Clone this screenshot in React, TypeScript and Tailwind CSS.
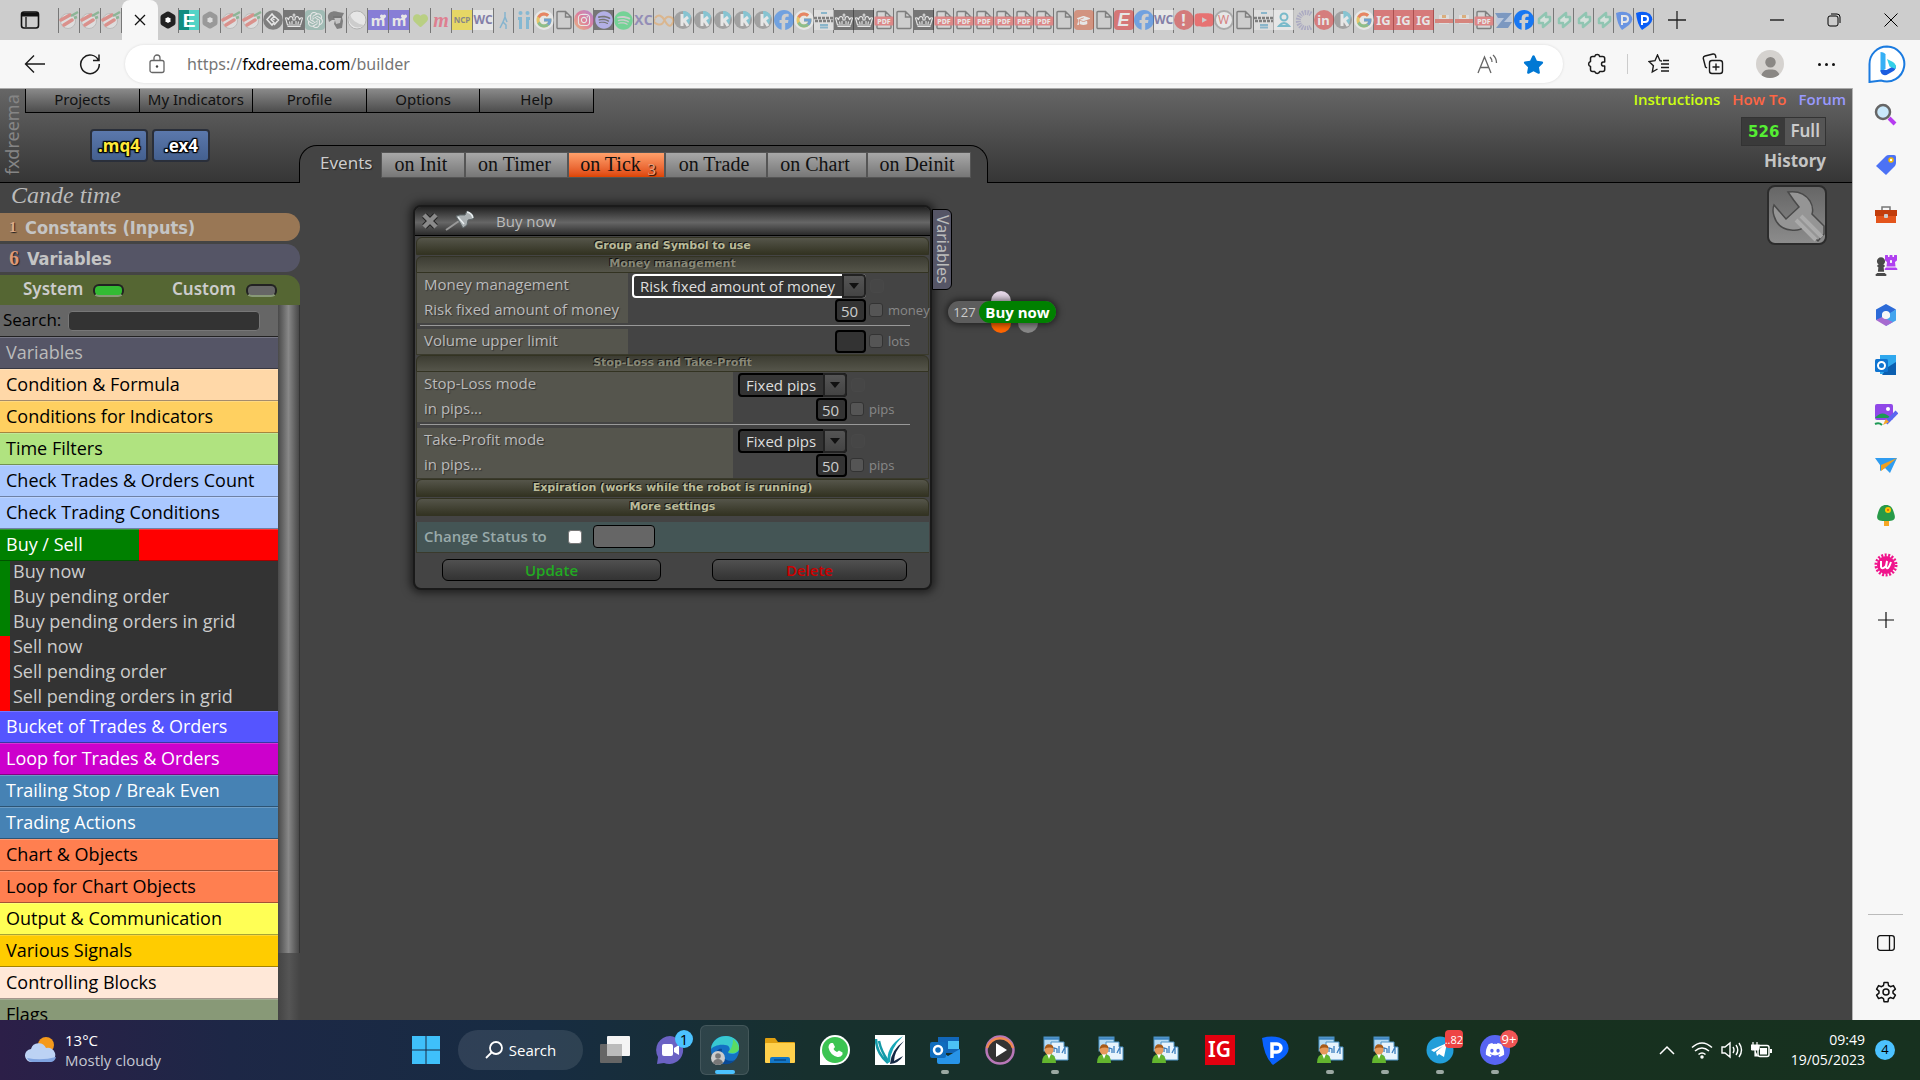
import React from "react";
import { FaFacebook, FaChessPawn, FaChessRook, FaDiscord, FaInstagram, FaSpotify, FaYoutube, FaUser, FaHeart, FaGraduationCap, FaStar } from "react-icons/fa6";
import { FcGoogle } from "react-icons/fc";
import { SiOpenai } from "react-icons/si";

/* ---------- browser tabs ---------- */

function Sq({ c, children }: { c: string; children?: React.ReactNode }) {
  return <span className={`flex size-5 items-center justify-center overflow-hidden leading-none ${c}`}>{children}</span>;
}

function Crown() {
  return (
    <svg viewBox="0 0 20 20" className="size-5">
      <path d="M3.500 15L1.500 8q2-1 3 2Q5 6.500 7 6.500T9 10h2q0-3.500 2-3.500T15.500 10q1-3 3-2l-2 7z" fill="none" stroke="#fff" strokeWidth="1.100" />
      <path d="M3.500 16.500h13M10 3.500v4M8.500 5h3M8 11v3M12 11v3M5.500 11.500l.5 2.500M14.500 11.500L14 14" stroke="#fff" strokeWidth="1.100" />
    </svg>
  );
}

function Doc({ pdf }: { pdf?: boolean }) {
  return (
    <svg viewBox="0 0 20 20" className="size-5">
      <path d="M4 1.500h7.500L17 7v10.500a1 1 0 0 1-1 1H4a1 1 0 0 1-1-1v-15a1 1 0 0 1 1-1zM11.500 1.500V7H17" fill={pdf ? "#ddd" : "none"} stroke="#333" strokeWidth="1.400" />
      {pdf && <rect x="0.500" y="6.500" width="19" height="9" rx="1" fill="#ee4444" />}
      {pdf && <text x="10" y="13.600" textAnchor="middle" fontFamily="Noto Sans" fontWeight="800" fontSize="7" fill="#fff">PDF</text>}
    </svg>
  );
}

function Hex({ light }: { light?: boolean }) {
  return (
    <svg viewBox="0 0 20 20" className="size-5">
      <path d="M10 4l5 3v6l-5 3-5-3V7z" fill={light ? "#eee" : "#fff"} stroke={light ? "#666" : "#222"} strokeWidth="5" strokeLinejoin="round" />
    </svg>
  );
}

function TabIcon({ kind }: { kind: string }) {
  switch (kind) {
    case "sushi":
      return (
        <svg viewBox="0 0 20 20" className="size-5">
          <circle cx="9" cy="11" r="7.500" fill="#eee" stroke="#aaa" />
          <path d="M2 10l9-5M5 15l8-5" stroke="#e8574d" strokeWidth="3.500" strokeLinecap="round" />
          <path d="M12 6l7-4M15 8l3-1" stroke="#4d9e60" strokeWidth="2.500" />
        </svg>
      );
    case "hex": return <Hex />;
    case "hexl": return <Hex light />;
    case "e": return <Sq c="bg-gradient-to-r from-[#118c80] from-50% to-[#53d3c6] to-50% font-['Liberation_Sans'] text-[19px] font-bold text-white">E</Sq>;
    case "diamond":
      return (
        <svg viewBox="0 0 20 20" className="size-5">
          <circle cx="10" cy="10" r="9.800" fill="#333" />
          <path d="M9 4l-5 5.500 5 5.500 2-2.500-3-3 3-3zM11 6l4.500 4-4.500 5M10 9l1.500 1" stroke="#fff" strokeWidth="1.500" fill="none" />
        </svg>
      );
    case "crown": return <Sq c="bg-[#222]"><Crown /></Sq>;
    case "ai": return <Sq c="rounded-sm bg-[#74aa9c]"><SiOpenai size={16} color="#fff" /></Sq>;
    case "face":
      return (
        <svg viewBox="0 0 20 20" className="size-5">
          <path d="M2 8C1 3 7 0 12 2l6 1-2 4 1 4-1 7-5 1-3-5 1-4-3 0-3 2z" fill="#333" />
          <path d="M8 7l7 1-1 5-4 1z" fill="#bbb" />
          <path d="M7 7h9" stroke="#222" strokeWidth="2" />
        </svg>
      );
    case "moon":
      return (
        <svg viewBox="0 0 20 20" className="size-5">
          <circle cx="10" cy="10" r="9" fill="#fff" stroke="#999" />
          <path d="M3 4q2 9 14 11A9 9 0 0 1 3 4z" fill="#ccc" />
        </svg>
      );
    case "m": return <Sq c="relative bg-[#4432e0] font-['Noto_Sans'] text-[15px] font-bold text-white">m<FaHeart size={6} className="absolute right-0.5 top-1" /></Sq>;
    case "heart": return <FaHeart size={15} color="#a6d13b" />;
    case "mm": return <Sq c="font-['Liberation_Serif'] text-[20px] font-bold italic text-[#ee3355]">m</Sq>;
    case "ncp": return <Sq c="bg-[#ffe100] font-['Noto_Sans'] text-[8px] font-bold text-[#444]">NCP</Sq>;
    case "wc": return <Sq c="bg-white font-['Open_Sans'] text-[12px] font-bold text-[#3b3384]">WC</Sq>;
    case "walk":
      return <svg viewBox="0 0 20 20" className="size-5"><path d="M11 2v5l-2 5 3 3v4M9 12l-3 6M11 7l2 5" fill="none" stroke="#3f9ccf" strokeWidth="1.500" /></svg>;
    case "ii":
      return (
        <svg viewBox="0 0 20 20" className="size-5" fill="#3fa4d8">
          <circle cx="6.500" cy="3" r="2" /><circle cx="13.500" cy="3" r="2" />
          <path d="M4 7h4v12H5V10H4zM12 7h4v3h-1v9h-3z" />
        </svg>
      );
    case "g": return <Sq c="rounded-full bg-white"><FcGoogle size={18} /></Sq>;
    case "doc": return <Doc />;
    case "pdf": return <Doc pdf />;
    case "insta": return <Sq c="rounded-full bg-gradient-to-tr from-[#ff9a1a] via-[#f0306a] to-[#9a35d0]"><FaInstagram size={14} color="#fff" /></Sq>;
    case "spp": return <Sq c="bg-[#222]"><FaSpotify size={18} color="#9a95ff" /></Sq>;
    case "spg": return <FaSpotify size={19} color="#1ed760" />;
    case "kc": return <Sq c="font-['Open_Sans'] text-[14px] font-bold text-[#5b4fa0]">XC</Sq>;
    case "loop":
      return <svg viewBox="0 0 20 20" className="size-5"><path d="M1 8q5-6 10 3t8 1q1-4-3-5t-6 4-7 3-2-5" fill="none" stroke="#e8a050" strokeWidth="2" /></svg>;
    case "k":
      return (
        <svg viewBox="0 0 20 20" className="size-5">
          <circle cx="9" cy="10" r="9" fill="#777" />
          <path d="M9 1a9 9 0 0 1 8 5l-2 9-6-5z" fill="#43bcd6" />
          <path d="M8 4v12M14 7l-6 5M10 10l4 6" stroke="#fff" strokeWidth="3" fill="none" />
        </svg>
      );
    case "fb": return <FaFacebook size={20} color="#1877f2" />;
    case "wired":
      return (
        <svg viewBox="0 0 20 20" className="size-5">
          <rect width="20" height="20" fill="#eee" />
          <path d="M7 3h6M6 15h8M6 17.500h8" stroke="#4a9fc8" strokeWidth="2" />
          <path d="M0 8h20M1 11h18" stroke="#333" strokeWidth="2.500" strokeDasharray="3 1" />
        </svg>
      );
    case "cap": return <Sq c="rounded-sm bg-[#d85a35]"><FaGraduationCap size={13} color="#fff" /></Sq>;
    case "er": return <Sq c="rounded-sm bg-[#dd2222] font-['Liberation_Sans'] text-[18px] font-bold italic text-white">E</Sq>;
    case "bang": return <Sq c="rounded-full bg-[#d92b2b] font-['Noto_Sans'] text-[16px] font-bold text-white">!</Sq>;
    case "yt": return <FaYoutube size={20} color="#ff1a1a" />;
    case "wcirc": return <Sq c="rounded-full border-2 border-[#888] bg-white font-['Noto_Sans'] text-[12px] text-[#dd3333]">W</Sq>;
    case "person":
      return (
        <svg viewBox="0 0 20 20" className="size-5">
          <rect width="20" height="20" fill="#fff" />
          <circle cx="10" cy="7" r="3.500" fill="none" stroke="#28a9c9" strokeWidth="2" /><path d="M5 16q5-6 10 0z" fill="none" stroke="#28a9c9" strokeWidth="2" />
        </svg>
      );
    case "dots":
      return <svg viewBox="0 0 20 20" className="size-5"><path d="M17 4A8 8 0 1 0 17 17" fill="none" stroke="#8c8ab8" strokeWidth="5" strokeDasharray="1.500 1" /></svg>;
    case "in": return <Sq c="rounded-full bg-[#dd3030] font-['Noto_Sans'] text-[13px] font-bold text-white">in</Sq>;
    case "ig": return <Sq c="bg-[#e02a2a] font-['Noto_Sans'] text-[13px] font-bold text-white">IG</Sq>;
    case "hat":
      return (
        <svg viewBox="0 0 20 20" className="size-5">
          <rect x="5" y="5" width="10" height="9" fill="#eee" /><rect x="8" y="5" width="4" height="3" fill="#e89030" />
          <rect x="1" y="9" width="18" height="4" fill="#e04030" />
        </svg>
      );
    case "z": return <svg viewBox="0 0 20 20" className="size-5"><circle cx="10" cy="10" r="8" fill="#a9c2ea" /><path d="M1 3h17l-8 9h8l-4 6H2l8-10H4z" fill="#2d65b5" /></svg>;
    case "bolt": return <svg viewBox="0 0 20 20" className="size-5"><path d="M12 3L5 9v4h4v4l7-6V7h-4z" fill="#dff3ea" stroke="#55bf98" strokeWidth="2.500" strokeLinejoin="round" /></svg>;
    case "p":
      return (
        <svg viewBox="0 0 20 20" className="size-5">
          <path d="M2 3q8-3 14 1 5 6-1 11-4 3-7 5-5-6-6-17z" fill="#0a5df5" />
          <path d="M8 15V6h3a2.500 2.500 0 0 1 0 6H8" fill="none" stroke="#fff" strokeWidth="2" />
        </svg>
      );
  }
  return null;
}

const TABS_A = ["hex", "e", "hexl", "sushi", "sushi", "diamond", "crown", "ai", "face", "moon", "m", "m", "heart", "mm", "ncp", "wc"];
const TABS_B = [
  "walk", "ii", "g", "doc", "insta", "spp", "spg", "kc", "loop", "k", "k", "k", "k", "k", "fb", "g", "wired", "crown", "crown", "pdf",
  "doc", "crown", "pdf", "pdf", "pdf", "pdf", "pdf", "pdf", "doc", "cap", "doc", "er", "fb", "wc", "bang", "yt", "wcirc", "doc",
  "wired", "person", "dots", "in", "k", "g", "ig", "ig", "ig", "hat", "hat", "pdf", "z", "fb", "bolt", "bolt", "bolt", "bolt", "p", "p",
];
const AWAKE = new Set(["A0", "A1", "B51", "B57"]);

function Tab({ kind, id, wide }: { kind: string; id: string; wide?: boolean }) {
  return (
    <button aria-label={`Tab ${kind}`} className={`flex h-[25px] shrink-0 items-center justify-center border-r border-[#777] ${wide ? "w-[21px]" : "w-5"}`}>
      <span className={`flex size-5 shrink-0 items-center justify-center ${AWAKE.has(id) ? "" : "opacity-50"}`}><TabIcon kind={kind} /></span>
    </button>
  );
}

function TabStrip() {
  return (
    <div className="flex h-10 shrink-0 items-center bg-[#cdcdcd]">
      <button aria-label="Tab actions" className="ml-5 mr-[18px] flex size-5 items-center justify-center">
        <svg viewBox="0 0 20 20" className="size-5"><rect x="1.500" y="2" width="17" height="16" rx="2.500" fill="none" stroke="#111" strokeWidth="1.600" /><path d="M2 2.500h16v4H2z" fill="#111" /><path d="M6 7v10" stroke="#111" strokeWidth="1.300" /></svg>
      </button>
      <div className="flex border-l border-[#777]">
        {[0, 1, 2].map((i) => <Tab key={i} kind="sushi" id={`S${i}`} wide />)}
      </div>
      <button aria-label="Close tab" className="flex h-10 w-9 items-center justify-center rounded-t-lg bg-[#f7f7f7]">
        <svg viewBox="0 0 12 12" className="size-3"><path d="M1 1l10 10M11 1L1 11" stroke="#111" strokeWidth="1.300" /></svg>
      </button>
      {TABS_A.map((k, i) => <Tab key={i} kind={k} id={`A${i}`} wide />)}
      {TABS_B.map((k, i) => <Tab key={i} kind={k} id={`B${i}`} />)}
      <button aria-label="New tab" className="ml-[14px]">
        <svg viewBox="0 0 18 18" className="size-[18px]"><path d="M9 0v18M0 9h18" stroke="#222" strokeWidth="1.300" /></svg>
      </button>
      <div className="ml-auto flex items-center gap-[43px] pr-[22px] text-black">
        <button aria-label="Minimize"><svg viewBox="0 0 14 14" className="size-3.5"><path d="M0 7h14" stroke="currentColor" strokeWidth="1.200" /></svg></button>
        <button aria-label="Restore"><svg viewBox="0 0 14 14" className="size-3.5"><rect x="1" y="3" width="10" height="10" rx="2" fill="none" stroke="currentColor" /><path d="M4 1h6a3 3 0 0 1 3 3v6" fill="none" stroke="currentColor" /></svg></button>
        <button aria-label="Close"><svg viewBox="0 0 14 14" className="size-3.5"><path d="M0.500 0.500l13 13M13.500 0.500l-13 13" stroke="currentColor" /></svg></button>
      </div>
    </div>
  );
}

function Toolbar() {
  return (
    <div className="flex h-12 shrink-0 items-center bg-[#f7f7f7] pl-6 text-[#1b1b1b]">
      <button aria-label="Back"><svg viewBox="0 0 22 20" className="h-5 w-[22px]"><path d="M21 10H2M10 1.500L1.500 10l8.500 8.500" fill="none" stroke="currentColor" strokeWidth="1.400" /></svg></button>
      <button aria-label="Refresh" className="ml-[33px]"><svg viewBox="0 0 22 22" className="size-[22px]"><path d="M19.500 7.500A9.300 9.300 0 1 0 20.300 11M20 1.500v6h-6" fill="none" stroke="currentColor" strokeWidth="1.500" /></svg></button>
      <div className="ml-6 flex h-[38px] flex-1 items-center rounded-full bg-white pl-6 pr-[19px] shadow-[0_0_3px_rgba(0,0,0,0.12)]">
        <svg viewBox="0 0 16 20" className="h-5 w-4"><rect x="1" y="6.500" width="14" height="12" rx="2" fill="none" stroke="#666" strokeWidth="1.300" /><path d="M5 6V4a3 3 0 0 1 6 0v2" fill="none" stroke="#666" strokeWidth="1.300" /><circle cx="8" cy="12.500" r="1.200" fill="#444" /></svg>
        <a href="https://fxdreema.com/builder" className="ml-[22px] flex-1 font-['Noto_Sans'] text-[16px] text-[#767676]">https://<span className="text-black">fxdreema.com</span>/builder</a>
        <button aria-label="Read aloud"><svg viewBox="0 0 22 20" className="h-5 w-[22px]" fill="none" stroke="#666" strokeWidth="1.300"><path d="M1 19L7.500 3 14 19M3.500 13.500h8M13 3q2 2 2 5M16 1q3.500 3 3.500 8" /></svg></button>
        <button aria-label="Favorite" className="ml-6"><FaStar size={21} color="#0078d4" /></button>
      </div>
      <button aria-label="Extensions" className="ml-[23px]">
        <svg viewBox="0 0 22 22" className="size-[22px]" fill="none" stroke="currentColor" strokeWidth="1.500" strokeLinejoin="round"><path d="M4.500 5.500q0-2 2-2h2.200a2.600 2.600 0 0 1 5 0h3q2 0 2 2v3.500q-3.200-.5-3.200 2t3.200 2v3.500q0 2-2 2h-3a2.600 2.600 0 0 1-5 0H6.500q-2 0-2-2v-3a2.600 2.600 0 0 1 0-5z" /></svg>
      </button>
      <span className="ml-[19px] h-5 w-px bg-[#ccc]" />
      <button aria-label="Favorites list" className="ml-5"><svg viewBox="0 0 22 20" className="h-5 w-[22px]" fill="none" stroke="currentColor" strokeWidth="1.400"><path d="M14 7l-2-.3L9.500 1 7 6.700l-6 .8 4.400 4.200L4.300 18l5.200-3M13 10h8M13 13.500h8M13 17h8M15 6.500h6" /></svg></button>
      <button aria-label="Collections" className="ml-8"><svg viewBox="0 0 22 22" className="size-[22px]" fill="none" stroke="currentColor" strokeWidth="1.400"><rect x="7.500" y="7.500" width="13" height="13" rx="2.500" /><path d="M14 10.500v7M10.500 14h7M5 15l-1.500-1L1.300 5.500Q1 3.500 3 3l8-2q2-.3 2.500 1.500L14 5" /></svg></button>
      <button aria-label="Profile" className="ml-8 flex size-7 items-end justify-center overflow-hidden rounded-full bg-[#d5d2cf]"><FaUser size={21} color="#8a8784" /></button>
      <button aria-label="More" className="ml-[34px] flex gap-1">{[0, 1, 2].map((i) => <span key={i} className="size-[3px] rounded-full bg-[#111]" />)}</button>
      <button aria-label="Bing" className="ml-[33px] mr-[14px]">
        <svg viewBox="0 0 38 38" className="size-[38px]">
          <path d="M19 1.500A17.500 17.500 0 1 1 13 35.500L1.500 37 1.500 19A17.500 17.500 0 0 1 19 1.500z" fill="#fff" stroke="#1b7be0" strokeWidth="2" />
          <path d="M12.500 7q4 0 5 2.500V24l-5 3z" fill="#36b0f5" /><path d="M12.500 25q0 6 6 5l7-4q3-2 2-6l-9 5z" fill="#1b5de0" /><path d="M19 14l6 3q4 3 2.500 7l-6-2.500z" fill="#35d0e8" />
        </svg>
      </button>
    </div>
  );
}

/* ---------- application ---------- */

const MENU = ["Projects", "My Indicators", "Profile", "Options", "Help"];
const EVENTS = [
  { t: "on Init", w: "w-[84px]" }, { t: "on Timer", w: "w-[103px]" }, { t: "on Tick", w: "w-[97px]", n: 3 },
  { t: "on Trade", w: "w-[102px]" }, { t: "on Chart", w: "w-[100px]" }, { t: "on Deinit", w: "w-[104px]" },
];

function Header() {
  return (
    <header className="relative flex h-[94px] shrink-0 border-b border-black bg-gradient-to-b from-[#666] to-[#363636] font-['Noto_Sans',sans-serif]">
      <span className="h-[90px] w-[25px] rotate-180 pl-px pt-1 text-[18px] leading-6 text-[#858585] [writing-mode:vertical-rl]">fxdreema</span>
      <div>
        <nav className="grid w-[569px] grid-cols-5 border-l border-black">
          {MENU.map((m) => (
            <button key={m} className="h-6 border-b border-r border-black bg-gradient-to-b from-[#8a8a8a] to-[#4d4d4d] pb-1 text-[15px] leading-5 text-[#111]">{m}</button>
          ))}
        </nav>
        <div className="ml-[65px] mt-4 flex gap-1">
          <button className="h-[33px] w-[58px] rounded-sm border-2 border-[#2a2f3a] bg-gradient-to-b from-[#5b78ac] to-[#44608f] text-[17px] font-bold leading-7 text-[#ffe93a] [text-shadow:0_0_2px_#000,0_0_2px_#000,1px_1px_1px_#000,-1px_-1px_1px_#000,1px_-1px_1px_#000,-1px_1px_1px_#000]">.mq4</button>
          <button className="h-[33px] w-[58px] rounded-sm border-2 border-[#2a2f3a] bg-gradient-to-b from-[#5b78ac] to-[#44608f] text-[17px] font-bold leading-7 text-white [text-shadow:0_0_2px_#000,0_0_2px_#000,1px_1px_1px_#000,-1px_-1px_1px_#000,1px_-1px_1px_#000,-1px_1px_1px_#000]">.ex4</button>
        </div>
      </div>
      <div className="absolute left-[299px] top-14 flex h-[38px] rounded-t-[18px] border-x border-t border-black bg-[#444] pl-5 pr-4 pt-1.5">
        <span className="w-[61px] text-[17px] leading-[22px] text-[#ccc] [text-shadow:1px_1px_1px_#222]">Events</span>
        {EVENTS.map((e) => (
          <button key={e.t} className={`relative h-[26px] border border-[#555] pb-0.5 font-['Liberation_Serif',serif] text-[20px] leading-[22px] text-[#111] ${e.w} ${e.n ? "bg-gradient-to-b from-[#ffa06a] to-[#dd4400] pr-3" : "bg-gradient-to-b from-[#a8a8a8] to-[#777] pr-1"}`}>
            {e.t}
            {e.n && <span className="absolute bottom-[-4px] right-2 text-[17px] text-[#e8a07a] [text-shadow:1px_1px_1px_#000]">{e.n}</span>}
          </button>
        ))}
      </div>
      <div className="ml-auto flex flex-col items-end pr-[26px]">
        <div className="-mr-5 flex gap-3 font-['Open_Sans'] text-[15px] font-semibold leading-5">
          <a href="#instructions" className="text-[#ccff11]">Instructions</a>
          <a href="#howto" className="text-[#ff6644]">How To</a>
          <a href="#forum" className="text-[#9999ff]">Forum</a>
        </div>
        <div className="mt-2 flex h-[29px] border border-[#333] bg-[#555]">
          <span className="bg-[#3a3a3a] px-1.5 font-['DejaVu_Sans'] text-[15px] font-bold leading-7 text-[#55ee33]">526</span>
          <span className="px-[5px] text-[17px] font-semibold leading-[26px] text-[#ccc]">Full</span>
        </div>
        <a href="#history" className="mt-[3px] text-[17px] font-bold leading-6 text-[#c4c4c4]">History</a>
      </div>
    </header>
  );
}

const CATS = [
  ["Variables", "bg-[#555566] text-[#bbb]"],
  ["Condition & Formula", "bg-[#ffd8a8] text-black"],
  ["Conditions for Indicators", "bg-[#ffd060] text-black"],
  ["Time Filters", "bg-[#b0e380] text-black"],
  ["Check Trades & Orders Count", "bg-[#aac8ff] text-black"],
  ["Check Trading Conditions", "bg-[#aac8ff] text-black"],
  ["Buy / Sell", "bg-[linear-gradient(90deg,#008000_50%,#ff0000_50%)] text-white"],
];
const BLOCKS = ["Buy now", "Buy pending order", "Buy pending orders in grid", "Sell now", "Sell pending order", "Sell pending orders in grid"];
const CATS2 = [
  ["Bucket of Trades & Orders", "bg-[#5555ff] text-white"],
  ["Loop for Trades & Orders", "bg-[#cc00cc] text-white"],
  ["Trailing Stop / Break Even", "bg-[#4682b4] text-white"],
  ["Trading Actions", "bg-[#4682b4] text-white"],
  ["Chart & Objects", "bg-[#ff7f50] text-black"],
  ["Loop for Chart Objects", "bg-[#ff7f50] text-black"],
  ["Output & Communication", "bg-[#ffff55] text-black"],
  ["Various Signals", "bg-[#ffcc00] text-black"],
  ["Controlling Blocks", "bg-[#ffe8d8] text-black"],
  ["Flags", "bg-[#889977] text-black"],
];

function Cat({ t, c }: { t: string; c: string }) {
  return <button className={`block h-8 w-full shrink-0 border-b border-t border-b-black/35 border-t-white/20 bg-origin-border pb-0.5 pl-1.5 text-left text-[18px] leading-7 ${c}`}>{t}</button>;
}

function LeftPanel() {
  return (
    <aside className="flex w-[300px] shrink-0 flex-col overflow-hidden">
      <h1 className="h-[30px] pl-[11px] font-['Liberation_Serif',serif] text-[24px] italic leading-[25px] text-[#bbb]">Cande time</h1>
      <button className="mb-[3px] flex h-7 shrink-0 items-center rounded-r-[14px] bg-[#997755] pl-[9px] font-['DejaVu_Sans_Condensed','DejaVu_Sans'] text-[18px] font-bold text-[#c4c4c4]">
        <span className="w-4 text-left font-['Liberation_Serif',serif] text-[15px] text-[#ddaa88] [text-shadow:1px_1px_1px_#222]">1</span>Constants (Inputs)
      </button>
      <button className="mb-[3px] flex h-7 shrink-0 items-center rounded-r-[14px] bg-[#555566] pl-[9px] font-['DejaVu_Sans_Condensed','DejaVu_Sans'] text-[18px] font-bold text-[#c4c4c4]">
        <span className="w-[18px] text-left font-['Liberation_Serif',serif] text-[20px] text-[#dd9977] [text-shadow:1px_1px_1px_#222]">6</span>Variables
      </button>
      <div className="flex h-[30px] shrink-0 items-center rounded-tr-[14px] bg-[#556633] pb-0.5 pl-[23px] font-['Noto_Sans'] text-[17px] font-semibold text-[#ccc]">
        <button className="flex w-[149px] items-center gap-2.5">System<span className="mt-0.5 h-[13px] w-[31px] rounded-md border-2 border-[#222] border-b-[#889977] bg-[#33bb33]" /></button>
        <button className="flex items-center gap-2.5">Custom<span className="mt-0.5 h-[13px] w-[31px] rounded-md border-2 border-[#222] border-b-[#889977] bg-[#666]" /></button>
      </div>
      <div className="flex min-h-0 flex-1">
        <div className="flex w-[278px] flex-col overflow-hidden">
          <div className="flex h-8 shrink-0 items-center border-b border-[#222] bg-[#666] pl-[3px]">
            <label htmlFor="search" className="w-[65px] pb-0.5 text-[17px] leading-7 text-black">Search:</label>
            <input id="search" className="h-5 w-48 rounded border border-[#777] bg-[#333] px-1 text-white" />
          </div>
          {CATS.map(([t, c]) => <Cat key={t} t={t} c={c} />)}
          <ul className="shrink-0 bg-[#333]">
            {BLOCKS.map((b, i) => (
              <li key={b} className={`h-[25px] border-l-[10px] pl-[3px] text-[18px] leading-5 text-[#ccc] ${i < 3 ? "border-[#008000]" : "border-[#ff0000]"}`}>{b}</li>
            ))}
          </ul>
          {CATS2.map(([t, c]) => <Cat key={t} t={t} c={c} />)}
        </div>
        <div className="flex-1 bg-gradient-to-r from-[#444] via-[#555] to-[#444]">
          <div className="h-[648px] border-r border-[#333] bg-gradient-to-r from-[#4a4a4a] via-[#888] to-[#484848]" />
        </div>
      </div>
    </aside>
  );
}

function SectionHead({ t, dim }: { t: string; dim?: boolean }) {
  return (
    <h3 className={`rounded-t-md border border-[#333322] text-center font-['DejaVu_Sans'] text-[11px] font-bold leading-[14px] [text-shadow:-1px_-1px_0_#111] ${dim ? "h-[17px] bg-gradient-to-b from-[#3d3d33] to-[#55554a] text-[#888877]" : "mb-px h-[18px] bg-gradient-to-b from-[#55554a] to-[#333322] pt-px text-[#bbbb99]"}`}>{t}</h3>
  );
}

function Pick({ label, focus }: { label: string; focus?: boolean }) {
  return (
    <div className={`flex h-6 rounded-[4px] border-2 bg-[#333] ${focus ? "w-[234px] border-white" : "w-[109px] border-black"}`}>
      <select aria-label={label} className={`min-w-0 flex-1 appearance-none text-[#ddd] outline-none ${focus ? "pl-1.5 text-[15px] leading-5" : "pl-1.5 text-[15px] leading-5"}`}>
        <option>{label}</option>
      </select>
      <span className="-my-0.5 -mr-0.5 flex w-6 shrink-0 items-center justify-center rounded-r-[4px] border-2 border-[#222] bg-gradient-to-b from-[#555] to-[#444]">
        <svg viewBox="0 0 10 6" className="h-1.5 w-2.5"><path d="M0 0h10L5 6z" fill="#111" /></svg>
      </span>
    </div>
  );
}

function NumRow({ label, value, unit, cell, unitW }: { label: string; value: string; unit: string; cell: string; unitW: string }) {
  return (
    <div className="flex h-[25px] items-center">
      <div className={`h-[25px] whitespace-nowrap bg-[#55554d] pl-[7px] leading-[22px] [text-shadow:1px_1px_1px_#333] ${cell}`}>{label}</div>
      <input aria-label={label} defaultValue={value} className="ml-auto h-[23px] w-[31px] rounded-[4px] border-2 border-black bg-[#333] pl-1 text-[15px] text-[#ccc]" />
      <span className={`flex items-center gap-[5px] pb-0.5 pl-[3px] text-[13px] leading-4 text-[#888] ${unitW}`}>
        <input type="checkbox" aria-label={unit} className="size-[14px] shrink-0 appearance-none rounded-[3px] border border-[#333] bg-[#555]" />
        {unit}
      </span>
    </div>
  );
}

function PickRow({ label, pick, cell, focus, unitW }: { label: string; pick: string; cell: string; focus?: boolean; unitW: string }) {
  return (
    <div className="flex h-[25px] items-center">
      <div className={`h-[25px] whitespace-nowrap bg-[#55554d] pl-[7px] leading-[22px] [text-shadow:1px_1px_1px_#333] ${cell}`}>{label}</div>
      <div className="ml-auto"><Pick label={pick} focus={focus} /></div>
      <span className={`pl-1 ${unitW}`}><span className="block size-[14px] rounded-sm border border-[#484848] bg-[#464646]" /></span>
    </div>
  );
}

function Rule() {
  return <hr className="mb-[3px] ml-[3px] mr-[18px] mt-0.5 border-[#999]" />;
}

function BlockWindow() {
  return (
    <section className="absolute left-[113px] top-[22px] w-[519px] rounded-lg border-2 border-[#1a1a1a] bg-[#444] text-[15px] text-[#bbb] shadow-[0_0_8px_3px_rgba(0,0,0,0.55)]">
      <div className="flex h-[29px] items-center rounded-t-md border-b border-black bg-[linear-gradient(#222,#666_55%,#2a2a2a)] pl-1.5">
        <button aria-label="Close window"><svg viewBox="0 0 18 18" className="size-[18px]"><path d="M3.500 3.500l11 11M14.500 3.500l-11 11" stroke="#222" strokeWidth="6.500" /><path d="M3 3l12 12M15 3L3 15" stroke="#8a8a8a" strokeWidth="4.500" /></svg></button>
        <button aria-label="Pin window" className="ml-1.5"><svg viewBox="0 0 30 22" className="h-[22px] w-[30px]"><path d="M1 20l13-9" stroke="#999" strokeWidth="2" /><path d="M11 6l4-1 5 0 2-4 6 4v4l-5 1-1 5-4 3z" fill="#aab0b2" stroke="#5d6668" /><path d="M22 2q5 1 6 6M13 7l6 7" stroke="#e8eef0" strokeWidth="1.500" fill="none" /></svg></button>
        <h2 className="ml-[21px]">Buy now</h2>
      </div>
      <div className="px-px pt-px">
        <SectionHead t="Group and Symbol to use" />
        <SectionHead t="Money management" dim />
        <div className="border-x border-b border-[#3a3a2c]">
          <PickRow label="Money management" pick="Risk fixed amount of money" cell="w-[211px]" focus unitW="w-[62px]" />
          <NumRow label="Risk fixed amount of money" value="50" unit="money" cell="w-[211px]" unitW="w-[62px]" />
          <Rule />
          <NumRow label="Volume upper limit" value="" unit="lots" cell="w-[211px]" unitW="w-[62px]" />
        </div>
        <SectionHead t="Stop-Loss and Take-Profit" dim />
        <div className="border-x border-b border-[#3a3a2c]">
          <PickRow label="Stop-Loss mode" pick="Fixed pips" cell="w-[316px]" unitW="w-[81px]" />
          <NumRow label="in pips..." value="50" unit="pips" cell="w-[316px]" unitW="w-[81px]" />
          <Rule />
          <PickRow label="Take-Profit mode" pick="Fixed pips" cell="w-[316px]" unitW="w-[81px]" />
          <NumRow label="in pips..." value="50" unit="pips" cell="w-[316px]" unitW="w-[81px]" />
        </div>
        <SectionHead t="Expiration (works while the robot is running)" />
        <SectionHead t="More settings" />
        <div className="mt-[6px] flex h-[31px] items-center border-b border-l border-[#3a3a2c] bg-[#445555] pb-px pl-[7px]">
          <label htmlFor="status" className="w-36 font-semibold text-[#99aaaa]">Change Status to</label>
          <input id="status" type="checkbox" className="size-[14px] appearance-none rounded-[3px] border border-[#777] bg-white" />
          <input aria-label="Status" className="ml-[11px] h-[23px] w-[62px] rounded-[4px] border border-black bg-[#666] px-1" />
        </div>
        <div className="flex gap-[51px] pb-[7px] pl-[26px] pt-1.5 leading-5">
          <button className="h-[22px] w-[219px] rounded-md border border-black bg-gradient-to-b from-[#505050] to-[#333] font-semibold text-[#22aa22]">Update</button>
          <button className="h-[22px] w-[195px] rounded-md border border-black bg-gradient-to-b from-[#505050] to-[#333] font-semibold text-[#cc0000]">Delete</button>
        </div>
      </div>
      <button className="absolute left-[517px] top-0.5 h-[81px] w-5 rounded-r-md border border-black bg-[#555566] font-['Noto_Sans'] text-[16px] leading-[17px] text-[#bbb] [writing-mode:vertical-rl]">Variables</button>
    </section>
  );
}

function Canvas() {
  return (
    <main className="relative flex-1 bg-[#444]">
      <button aria-label="Settings" className="absolute right-[25px] top-0.5 h-[60px] w-[60px] rounded-lg border-2 border-[#2c2c2c] bg-gradient-to-b from-[#666] to-[#8c8c8c]">
        <svg viewBox="0 0 56 56" className="size-full">
          <path d="M19 5q15-2 22 9 4 7 2 13l12 12v8l-6 7-14-14q-4 4-13 3Q9 42 5 29q-2-6 0-11l12 14 13-12q-5-6-11-15z" fill="#959595" stroke="#4a4a4a" strokeWidth="1.500" />
          <path d="M27 33l20 20M32 29l21 21" stroke="#ababab" strokeWidth="4" />
        </svg>
      </button>
      <BlockWindow />
      <div className="absolute left-[648px] top-[118px] h-[22px] w-[108px]">
        <span className="absolute left-[43px] top-[-10px] size-5 rounded-full bg-[#e6d8e8]" />
        <span className="absolute left-[43px] top-3 size-5 rounded-full bg-[#ff6600]" />
        <span className="absolute left-[70px] top-3 size-5 rounded-full bg-[#888]" />
        <button className="absolute inset-0 flex rounded-full bg-[#5d5d5d] leading-[22px] shadow-[0_0_6px_2px_rgba(0,0,0,0.5)]">
          <span className="w-[31px] pl-0.5 text-[13px] text-[#ccc]">127</span>
          <span className="flex-1 rounded-full bg-[#008000] text-[15px] font-bold text-white">Buy now</span>
        </button>
      </div>
    </main>
  );
}

/* ---------- browser side rail ---------- */

const RAIL: [string, React.ReactNode][] = [
  ["Search", <><circle cx="9" cy="9" r="7" fill="#c9e8fb" stroke="#666" strokeWidth="2.500" /><path d="M15 15l6 6" stroke="#b63cf0" strokeWidth="4" /></>],
  ["Shopping", <><path d="M2 13L12 3q1-1 3-1h5q2 0 2 2v6q0 1-1 3l-9 9z" fill="#4c72f5" /><circle cx="17" cy="7" r="2" fill="#fff" stroke="#f5b800" strokeWidth="1.500" /></>],
  ["Tools", <><path d="M8 7V4h8v3" fill="none" stroke="#777" strokeWidth="1.500" /><path d="M1 7h22v6H1z" fill="#c23d0c" /><path d="M2 13h20v7H2z" fill="#e4551c" /><rect x="10" y="11" width="4" height="4" rx="1" fill="#ccc" /></>],
  ["Games", <><g transform="translate(0 3)"><FaChessPawn size={20} color="#4a4a4a" x={-3} /></g><g transform="translate(11 1)"><FaChessRook size={16} color="#b040f0" x={-2} /></g></>],
  ["Microsoft 365", <><path d="M12 1l10 5.500L16 11l-4-3-4 3v5L2 17V6.500z" fill="#2c6bd8" /><path d="M22 6.500v11L12 23l-1-7 5-2V10z" fill="#42a4ee" /><path d="M2 17l6-3 4 2 7 3-7 4z" fill="#a66bd0" /><circle cx="12" cy="12" r="4" fill="#f7f7f7" /></>],
  ["Outlook", <><rect x="6" y="2" width="16" height="19" fill="#2fa8ee" /><path d="M14 14l8-5v13H8z" fill="#0b5fb0" /><rect x="1" y="6" width="13" height="13" rx="1.500" fill="#0f74d0" /><circle cx="7.500" cy="12.500" r="3.500" fill="none" stroke="#fff" strokeWidth="2" /></>],
  ["Designer", <><rect x="1" y="1" width="18" height="16" rx="2" fill="#9048e8" /><circle cx="14" cy="6" r="2" fill="#fff" /><path d="M1 15q7-9 16 0z" fill="#1d9a55" /><path d="M12 20L23 9" stroke="#5a66f0" strokeWidth="4" /><path d="M9 22l3-6 3 3z" fill="#f5a623" /><path d="M1 21q4-2 7 1" stroke="#1d9a55" strokeWidth="2" fill="none" /></>],
  ["Drop", <><path d="M1 5l22 0-7 15-5-5-5 3v-6z" fill="#2f9cf0" /><path d="M7 18V12L23 5 11 15z" fill="#f0a020" /></>],
  ["Tree", <><rect x="10" y="16" width="5" height="7" fill="#f5a623" /><path d="M12 2c6 0 7 5 8 8 3 8-2 8-8 8s-11 0-8-8c1-3 2-8 8-8z" fill="#279a48" /><circle cx="14" cy="7" r="3" fill="#ffc400" /><circle cx="14" cy="7" r="1" fill="#e05010" /></>],
  ["W", <><circle cx="12" cy="12" r="9" fill="#f0148c" /><circle cx="12" cy="12" r="10" fill="none" stroke="#f0148c" strokeWidth="3" strokeDasharray="2 1.500" /><path d="M7 8l0 6q1 3 5-1l1-5-1 6q2 4 5-5" fill="none" stroke="#fff" strokeWidth="2" /></>],
];

function Rail() {
  return (
    <aside className="flex w-[68px] shrink-0 flex-col items-center border-l border-[#b5b5b5] bg-[#f7f7f7] pr-0.5 pt-[15px] text-[#111]">
      <div className="flex flex-col gap-[26px]">
        {RAIL.map(([n, d]) => <button key={n} aria-label={n}><svg viewBox="0 0 24 24" className="size-6">{d}</svg></button>)}
      </div>
      <button aria-label="Add" className="mt-[35px]"><svg viewBox="0 0 16 16" className="size-4"><path d="M8 0v16M0 8h16" stroke="currentColor" strokeWidth="1.200" /></svg></button>
      <div className="mt-auto flex flex-col items-center pb-[17px]">
        <span className="h-px w-[35px] bg-[#bbb]" />
        <button aria-label="Toggle panel" className="mt-5"><svg viewBox="0 0 18 16" className="h-4 w-[18px]"><rect x="0.700" y="0.700" width="16.600" height="14.600" rx="2.500" fill="none" stroke="currentColor" strokeWidth="1.300" /><path d="M12.500 1v14" stroke="currentColor" strokeWidth="1.300" /></svg></button>
        <button aria-label="Preferences" className="mt-[30px]"><svg viewBox="0 0 22 22" className="size-[22px]" fill="none" stroke="currentColor" strokeWidth="1.500" strokeLinejoin="round"><path d="M9 1.500h4l.5 3 2 1.200 2.900-1.100 2 3.500-2.400 2v2l2.400 2-2 3.500-2.900-1.100-2 1.200-.5 3H9l-.5-3-2-1.200-2.900 1.100-2-3.500 2.400-2v-2l-2.400-2 2-3.500 2.900 1.100 2-1.200z" /><circle cx="11" cy="11" r="3" /></svg></button>
      </div>
    </aside>
  );
}

/* ---------- taskbar ---------- */

function PBig() {
  return <svg viewBox="0 0 30 30" className="size-[30px]"><path d="M2 3q14-4 24 3 6 9-2 16l-11 8Q4 22 2 3z" fill="#0a62ff" /><path d="M12 23V9h5a4 4 0 0 1 0 8h-5" fill="none" stroke="#fff" strokeWidth="3.500" /></svg>;
}

function Terminal() {
  return (
    <svg viewBox="0 0 30 30" className="size-[30px]">
      <rect x="4" y="2" width="15" height="14" fill="#b8dcf4" stroke="#4c94c8" /><path d="M4 3.500h15" stroke="#3f86c0" strokeWidth="2.500" />
      <path d="M11 7h13v5h4v13H14v-4h-3z" fill="#e8f4fd" stroke="#4c94c8" />
      <path d="M14 17v-4l3 1v4M19 11v7M22 18l3-6v7" fill="none" stroke="#3c7fc0" strokeWidth="1.300" />
      <path d="M2 28q0-9 7-9t7 9z" fill="#63b52e" /><path d="M7 19l2 5 2-5z" fill="#fff" /><circle cx="9" cy="15" r="4.500" fill="#e59a5c" /><path d="M4.500 14q1-6 6-4.500 3 .5 3 4-4-2-9 .5z" fill="#a85a18" />
    </svg>
  );
}

const APPS: { n: string; run?: boolean; badge?: string; bc?: string; icon: React.ReactNode }[] = [
  { n: "Task view", icon: <svg viewBox="0 0 30 30" className="size-[30px]"><rect x="0" y="9" width="22" height="19" rx="1" fill="#666" /><rect x="7" y="1" width="23" height="20" rx="1" fill="#f4f4f4" /><rect x="7" y="9" width="15" height="12" fill="#bbb" /></svg> },
  { n: "Chat", badge: "1", bc: "rounded-full bg-[#4cc2ff] text-black", icon: <svg viewBox="0 0 30 30" className="size-[30px]"><path d="M15 1a14 14 0 1 1-6 27l-7 1 1-7A14 14 0 0 1 15 1z" fill="#6b62c4" /><rect x="7" y="9" width="11" height="12" rx="2" fill="#fff" /><path d="M19 13l5-3v10l-5-3z" fill="#fff" /></svg> },
  { n: "Edge", icon: <svg viewBox="0 0 30 30" className="size-[30px]"><circle cx="15" cy="15" r="14" fill="#1470c4" /><path d="M1 14C2 5 9 1 16 1c8 0 14 6 13 12 0 5-6 7-11 5 3-3 2-8-3-8-7-1-12 2-14 4z" fill="#38c8d0" /><path d="M23 4c5 4 6 8 6 10-1 4-7 5-11 3 4-3 5-8 5-13z" fill="#5bdc62" /><path d="M12 14c-2 9 6 14 13 11-7 8-20 4-19-6 0-3 3-6 6-5z" fill="#0a4a95" /><circle cx="8" cy="23" r="7" fill="#ccc" /><circle cx="8" cy="21" r="2.800" fill="#777" /><path d="M3 28q1-4 5-4t5 4q-5 4-10 0z" fill="#777" /></svg> },
  { n: "Files", icon: <svg viewBox="0 0 30 30" className="size-[30px]"><path d="M0 4q0-1 1-1h9l3 4h16q1 0 1 1v5H0z" fill="#e0a010" /><rect x="0" y="8" width="30" height="20" rx="1" fill="#ffd04c" /><path d="M5 28v-4q0-2 2-2h16q2 0 2 2v4z" fill="#1478c8" /><path d="M9 25h12" stroke="#0a4a85" strokeWidth="1.500" /></svg> },
  { n: "WhatsApp", icon: <span className="flex size-[30px] items-center justify-center rounded-full rounded-bl-sm bg-white"><span className="flex size-[26px] items-center justify-center rounded-full bg-[#3cc452]"><svg viewBox="0 0 20 20" className="size-5"><path d="M6 3l2 0 2 4-1.500 2q1 2 3.500 3l2-1.500 3.500 2v2q-2 3-5 2.500Q5 15 3.500 7.500 3.500 4 6 3z" fill="#fff" /></svg></span></span> },
  { n: "Wing", icon: <svg viewBox="0 0 30 30" className="size-[30px]"><rect width="30" height="30" fill="#fff" /><path d="M1 4q0 14 12 24M4 6q2 10 9 20" fill="none" stroke="#159aa8" strokeWidth="2.500" /><path d="M13 28Q10 12 28 1 15 14 15 27z" fill="#18a8b8" /><path d="M15 29Q16 15 29 6 19 17 19 26l9-5q-4 7-13 8z" fill="#142844" /></svg> },
  { n: "Outlook", run: true, icon: <svg viewBox="0 0 30 30" className="size-[30px]"><rect x="8" y="2" width="21" height="16" fill="#1166b8" /><rect x="18" y="6" width="11" height="8" fill="#4cc2f5" /><path d="M7 14l11 7 12-7v13q0 2-2 2H9q-2 0-2-2z" fill="#2894e8" /><rect x="0" y="7" width="16" height="16" rx="2" fill="#0f6cbd" /><circle cx="8" cy="15" r="4" fill="none" stroke="#fff" strokeWidth="2.500" /></svg> },
  { n: "Media player", icon: <svg viewBox="0 0 30 30" className="size-[30px]"><circle cx="15" cy="15" r="13.500" fill="#333" stroke="#b878b8" strokeWidth="2.500" /><path d="M2 13A13.500 13.500 0 0 1 28 13" fill="none" stroke="#f08850" strokeWidth="2.500" /><path d="M11 8l11 7-11 7z" fill="#fff" /></svg> },
  { n: "Terminal 1", run: true, icon: <Terminal /> },
  { n: "Terminal 2", icon: <Terminal /> },
  { n: "Terminal 3", icon: <Terminal /> },
  { n: "IG", icon: <span className="flex size-[30px] items-center justify-center bg-[#e3000f] font-['Noto_Sans'] text-[21px] font-semibold text-white">IG</span> },
  { n: "P", icon: <PBig /> },
  { n: "Terminal 4", run: true, icon: <Terminal /> },
  { n: "Terminal 5", run: true, icon: <Terminal /> },
  { n: "Telegram", run: true, badge: "..82", bc: "rounded bg-[#ee4444] text-white text-[11px]", icon: <svg viewBox="0 0 30 30" className="size-[30px]"><circle cx="15" cy="15" r="13.500" fill="#229ed9" /><path d="M6 15L22 8l-3 14-5-3-2 2-1-4 7-6-9 6z" fill="#fff" /></svg> },
  { n: "Discord", run: true, badge: "9+", bc: "rounded-full bg-[#f05555] text-white text-[13px]", icon: <span className="flex size-[30px] items-center justify-center rounded-full bg-[#5865f2]"><FaDiscord size={20} color="#fff" /></span> },
];

function Taskbar() {
  return (
    <footer className="relative flex h-[60px] shrink-0 items-center bg-[linear-gradient(90deg,#2c1f48_0%,#1d2746_12%,#172c42_28%,#17302e_42%,#17301f_75%,#17311f_100%)] text-[15px] text-white">
      <button className="flex items-center gap-2 pl-[25px] text-left leading-5">
        <svg viewBox="0 0 32 32" className="size-8"><circle cx="21" cy="11" r="8" fill="#f59a1c" /><path d="M7 28a6.500 6.500 0 0 1-1-13 8 8 0 0 1 15-1 7 7 0 0 1 4 14z" fill="#bcd2f4" /><path d="M2 24q2 4 6 4h17q5 0 6-5-14 4-29 1z" fill="#7fa3e0" /></svg>
        <span>13°C<br /><span className="text-[#c5c8d2]">Mostly cloudy</span></span>
      </button>
      <div className="absolute left-[411px] flex h-[60px] items-center">
        <button aria-label="Start"><svg viewBox="0 0 30 30" className="size-[30px]" fill="#3fc0fa"><path d="M1 1h13.500v13.500H1zM15.500 1H29v13.500H15.500zM1 15.500h13.500V29H1zM15.500 15.500H29V29H15.500z" /></svg></button>
        <button className="ml-[17px] mr-1 flex h-10 w-[125px] items-center justify-center gap-1.5 rounded-full bg-white/10">
          <svg viewBox="0 0 18 18" className="size-[18px]"><circle cx="11" cy="7" r="6" fill="none" stroke="#fff" strokeWidth="1.800" /><path d="M6.500 11.500L1 17" stroke="#fff" strokeWidth="1.800" /></svg>
          Search
        </button>
        {APPS.map((a) => (
          <button key={a.n} aria-label={a.n} className="relative flex h-[60px] w-[55px] items-center justify-center">
            {a.n === "Edge" && <span className="absolute inset-x-[3px] inset-y-[5px] rounded-md border border-white/10 bg-white/10" />}
            <span className="relative">{a.icon}</span>
            {a.badge && <span className={`absolute right-1 top-2.5 flex h-[18px] min-w-[18px] items-center justify-center leading-none ${a.bc}`}>{a.badge}</span>}
            {a.n === "Edge" && <span className="absolute bottom-1.5 h-1 w-5 rounded-full bg-[#4cc2ff]" />}
            {a.run && <span className="absolute bottom-1.5 h-1 w-2 rounded-full bg-[#9ba8a2]" />}
          </button>
        ))}
      </div>
      <div className="ml-auto flex items-center pr-[25px]">
        <svg viewBox="0 0 16 10" className="h-2.5 w-4"><path d="M1 9l7-7 7 7" fill="none" stroke="#fff" strokeWidth="1.500" /></svg>
        <svg viewBox="0 0 22 18" className="ml-4 h-[18px] w-[22px]" fill="none" stroke="#fff" strokeWidth="1.500"><path d="M1 6.500q10-9 20 0M4 10q7-6 14 0M7.500 13.500q3.500-3 7 0" /><circle cx="11" cy="16" r="1" fill="#fff" /></svg>
        <svg viewBox="0 0 22 18" className="ml-2 h-[18px] w-[22px]" fill="none" stroke="#fff" strokeWidth="1.400"><path d="M1 6h3l5-4v14l-5-4H1zM12 6q2 3 0 6M15 4q3.500 5 0 10M18 2q5 7 0 14" /></svg>
        <svg viewBox="0 0 22 18" className="ml-2 h-[18px] w-[22px]"><path d="M2 1v3M6 1v3M0 4h8v3q0 2-2 2H2Q0 9 0 7zM4 9v6h3" fill="#fff" stroke="#fff" strokeWidth="1.200" /><rect x="7" y="4.500" width="11" height="11" rx="2" fill="none" stroke="#fff" strokeWidth="1.500" /><rect x="9" y="7" width="7" height="6.500" fill="#fff" /><path d="M20 8v4" stroke="#fff" strokeWidth="2" /></svg>
        <span className="ml-[18px] text-right text-[14px] leading-5">09:49<br />19/05/2023</span>
        <span className="ml-2.5 flex size-5 items-center justify-center rounded-full bg-[#4cc2ff] text-[13px] text-black">4</span>
      </div>
    </footer>
  );
}

export default function App() {
  return (
    <div className="flex h-screen flex-col overflow-hidden bg-[#444] font-['Open_Sans','Noto_Sans',sans-serif]">
      <TabStrip />
      <Toolbar />
      <div className="flex min-h-0 flex-1">
        <div className="flex min-w-0 flex-1 flex-col border-t border-[#aaa]">
          <Header />
          <div className="flex min-h-0 flex-1">
            <LeftPanel />
            <Canvas />
          </div>
        </div>
        <Rail />
      </div>
      <Taskbar />
    </div>
  );
}
